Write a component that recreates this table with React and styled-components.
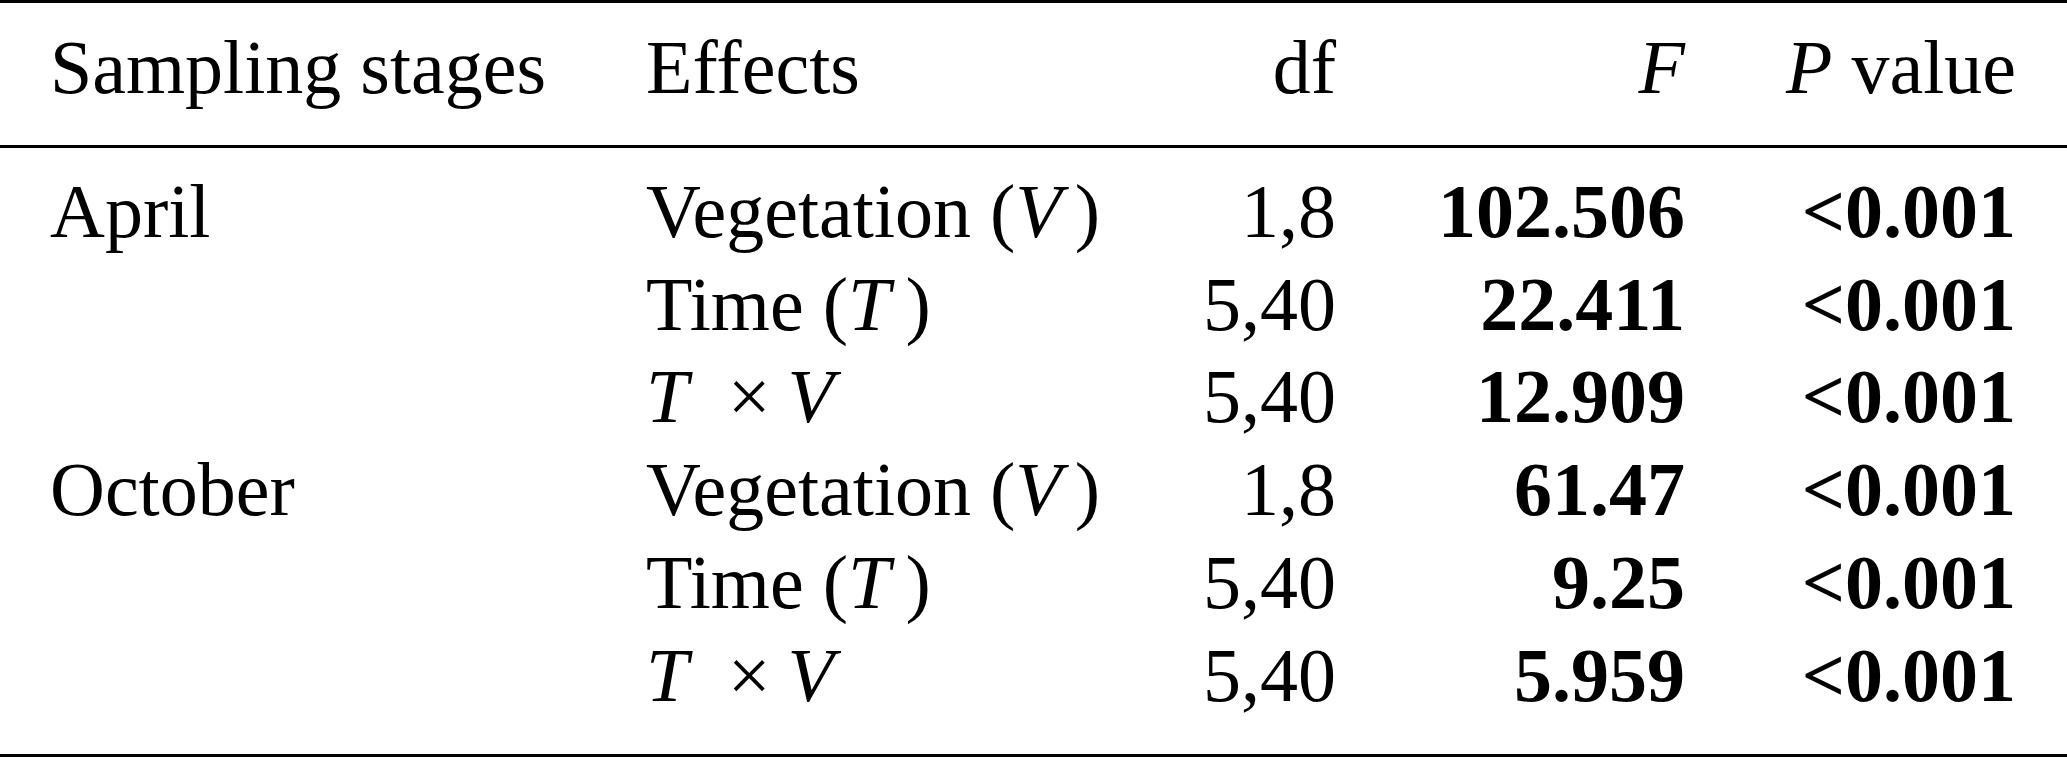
import React from 'react';
import styled, { createGlobalStyle } from 'styled-components';

// ANOVA table: sampling stage x effects
const rows = [
  { stage: 'April', effect: 'veg', df: '1,8', f: '102.506', p: '<0.001' },
  { stage: '', effect: 'time', df: '5,40', f: '22.411', p: '<0.001' },
  { stage: '', effect: 'inter', df: '5,40', f: '12.909', p: '<0.001' },
  { stage: 'October', effect: 'veg', df: '1,8', f: '61.47', p: '<0.001' },
  { stage: '', effect: 'time', df: '5,40', f: '9.25', p: '<0.001' },
  { stage: '', effect: 'inter', df: '5,40', f: '5.959', p: '<0.001' },
];

const GlobalStyle = createGlobalStyle`
  html, body {
    margin: 0;
    padding: 0;
    background: #fff;
  }
`;

const Table = styled.div`
  width: 2067px;
  height: 757px;
  box-sizing: border-box;
  border-top: 3px solid #000;
  border-bottom: 3px solid #000;
  font-family: "Liberation Serif", "Times New Roman", serif;
  font-size: 76px;
  color: #000;
  overflow: hidden;
`;

const Grid = styled.div`
  display: grid;
  grid-template-columns: 596px 534px 156px 349px 331px;
  line-height: 92.8px;
`;

const HeadRow = styled(Grid)`
  padding: 18px 51px 31px 50px;
  border-bottom: 3px solid #000;
`;

const Body = styled.div`
  padding: 17px 51px 0 50px;
`;

const Cell = styled.div`
  white-space: nowrap;
  text-align: ${(p) => (p.$right ? 'right' : 'left')};
  font-weight: ${(p) => (p.$bold ? 700 : 400)};
`;

const Var = styled.i`
  font-style: italic;
  margin-right: ${(p) => p.$corr || '0'};
`;

const Times = styled.span`
  margin: 0 0.22em 0 0.52em;
`;

const Effect = ({ kind }) => {
  if (kind === 'veg') return <>Vegetation (<Var $corr="0.17em">V</Var>)</>;
  if (kind === 'time') return <>Time (<Var $corr="0.2em">T</Var>)</>;
  return <><Var>T</Var><Times>×</Times><Var>V</Var></>;
};

const App = () => (
  <>
    <GlobalStyle />
    <Table>
      <HeadRow>
        <Cell>Sampling stages</Cell>
        <Cell>Effects</Cell>
        <Cell $right>df</Cell>
        <Cell $right><Var>F</Var></Cell>
        <Cell $right><Var>P</Var> value</Cell>
      </HeadRow>
      <Body>
        {rows.map((r, i) => (
          <Grid key={i}>
            <Cell>{r.stage}</Cell>
            <Cell><Effect kind={r.effect} /></Cell>
            <Cell $right>{r.df}</Cell>
            <Cell $right $bold>{r.f}</Cell>
            <Cell $right $bold>{r.p}</Cell>
          </Grid>
        ))}
      </Body>
    </Table>
  </>
);

export default App;
